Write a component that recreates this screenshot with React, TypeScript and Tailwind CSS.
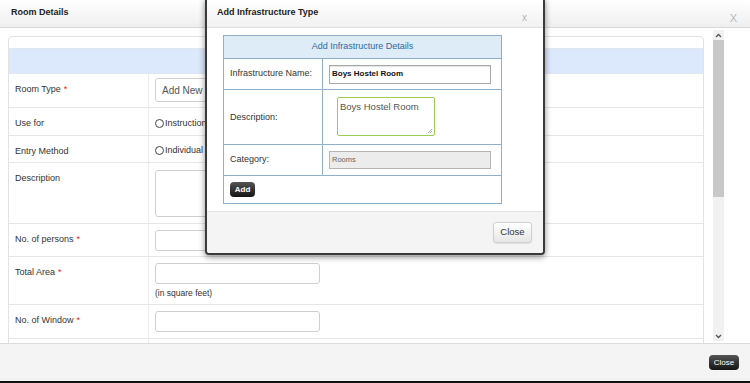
import * as React from 'react';

const Star = () => <span className="text-[#e41b17] ml-[3px]">*</span>;

type RowProps = {
    label: React.ReactNode,
    h: string,
    children?: React.ReactNode
};

const Row = ({label, h, children}: RowProps) => (
    <div className={`flex border-b border-[#e6e6e6] ${h}`}>
        <div className="w-[140px] shrink-0 border-r border-[#ececec] pl-[6px] pt-[9px] text-[9px] leading-[12px] text-[#333]">{label}</div>
        <div className="pl-[6px]">{children}</div>
    </div>
);

const Radio = ({text}: {text: string}) => (
    <span className="inline-flex items-center mr-[2px]">
        <span className="w-[9px] h-[9px] rounded-full border border-[#444] mr-[1px]"></span>
        <span>{text}</span>
    </span>
);

const Chevron = ({up}: {up?: boolean}) => (
    <svg width="7" height="5" viewBox="0 0 7 5">
        <path d={up ? 'M1 4 L3.5 1.5 L6 4' : 'M1 1 L3.5 3.5 L6 1'} fill="none" stroke="#555" strokeWidth="1.3" />
    </svg>
);

const InfraModal = () => (
    <div className="absolute left-[205px] top-[-2px] w-[340px] h-[257px] border-2 border-[#3a3a3a] rounded-b-[4px] bg-white shadow-[0_2px_6px_rgba(0,0,0,0.45)] flex flex-col font-['Liberation_Sans',Arial,sans-serif]">
        <div className="h-[28px] shrink-0 border-b border-[#dedede] bg-gradient-to-b from-white to-[#f1f1f1] flex justify-between pl-[10px] pr-[16px]">
            <span className="self-center mt-[-1px] text-[9px] font-bold text-[#222]">Add Infrastructure Type</span>
            <span className="self-end mb-[2px] text-[10px] text-[#b5b5b5]">x</span>
        </div>
        <div className="h-[183px] shrink-0 pl-[16px] pt-[7px]">
            <div className="w-[279px] border border-[#8fb0cd] text-[9px] text-[#333]">
                <div className="h-[23px] bg-[#deecf8] border-b border-[#8fb0cd] flex items-center justify-center text-[#2d69a0]">Add Infrastructure Details</div>
                <div className="h-[31px] flex border-b border-[#8fb0cd]">
                    <div className="w-[99px] border-r border-[#8fb0cd] pl-[6px] flex items-center">Infrastructure Name:</div>
                    <div className="pl-[6px] flex items-center">
                        <div className="w-[162px] h-[19px] border border-[#a9a9a9] shadow-[inset_0_1px_1px_rgba(0,0,0,0.12)] flex items-center pl-[2px] text-[8px] font-bold text-[#111]">Boys Hostel Room</div>
                    </div>
                </div>
                <div className="h-[55px] flex border-b border-[#8fb0cd]">
                    <div className="w-[99px] border-r border-[#8fb0cd] pl-[6px] flex items-center pt-[2px]">Description:</div>
                    <div className="pl-[14px] pt-[7px]">
                        <div className="relative w-[98px] h-[39px] border border-[#9acd52] rounded-[2px] pl-[2px] pt-[2px] text-[9.5px] text-[#555]">
                            Boys Hostel Room
                            <svg className="absolute right-[1px] bottom-[1px]" width="6" height="6" viewBox="0 0 6 6">
                                <path d="M5 1 L1 5 M5 3 L3 5" stroke="#999" strokeWidth="0.8" />
                            </svg>
                        </div>
                    </div>
                </div>
                <div className="h-[31px] flex border-b border-[#8fb0cd]">
                    <div className="w-[99px] border-r border-[#8fb0cd] pl-[6px] flex items-center">Category:</div>
                    <div className="pl-[6px] flex items-center">
                        <div className="w-[162px] h-[18px] border border-[#b5b5b5] bg-[#ececec] flex items-center pl-[2px] text-[7.5px] text-[#666]">Rooms</div>
                    </div>
                </div>
                <div className="h-[27px] flex items-center pl-[6px]">
                    <span className="w-[25px] h-[15px] rounded-[4px] bg-gradient-to-b from-[#555] to-[#151515] text-white text-[8px] font-bold flex items-center justify-center">Add</span>
                </div>
            </div>
        </div>
        <div className="flex-1 border-t border-[#e3e3e3] bg-[#f4f4f4] flex items-start justify-end pr-[11px] pt-[10px] rounded-b-[3px]">
            <span className="w-[39px] h-[21px] rounded-[3px] border border-[#cfcfcf] bg-gradient-to-b from-white to-[#e6e6e6] shadow-[0_1px_1px_rgba(0,0,0,0.08)] text-[9.5px] text-[#333] flex items-center justify-center">Close</span>
        </div>
    </div>
);

export default function App() {
    return (
        <div className="relative w-[750px] h-[383px] overflow-hidden bg-white flex flex-col font-['Liberation_Sans',Arial,sans-serif]">
            <div className="h-[28px] shrink-0 border-b border-[#d8d8d8] bg-gradient-to-b from-white to-[#efefef] flex justify-between pl-[11px] pr-[13px]">
                <span className="self-center mt-[-1px] text-[9px] font-bold text-[#222]">Room Details</span>
                <span className="self-end mb-[1px] text-[11px] text-[#b8b8b8]">X</span>
            </div>
            <div className="h-[315px] shrink-0 flex">
                <div className="w-[713px] shrink-0 pl-[8px] pr-[9px] pt-[8px] overflow-hidden">
                    <div className="border border-[#e2e2e2] rounded-t-[4px]">
                        <div className="h-[11px]"></div>
                        <div className="h-[26px] bg-[#dce8fb] border-y border-[#e0e6ee]"></div>
                        <Row label={<>Room Type<Star /></>} h="h-[34px]">
                            <div className="mt-[4px] w-[165px] h-[24px] border border-[#cfcfcf] rounded-[3px] pl-[6px] flex items-center text-[10px] text-[#555]">Add New</div>
                        </Row>
                        <Row label="Use for" h="h-[28px]">
                            <div className="mt-[9px] flex text-[9px] text-[#333]"><Radio text="Instructional" /></div>
                        </Row>
                        <Row label="Entry Method" h="h-[27px]">
                            <div className="mt-[8px] flex text-[9px] text-[#333]"><Radio text="Individual" /><Radio text="Bulk" /></div>
                        </Row>
                        <Row label="Description" h="h-[61px]">
                            <div className="mt-[7px] w-[165px] h-[47px] border border-[#cfcfcf] rounded-[3px]"></div>
                        </Row>
                        <Row label={<>No. of persons<Star /></>} h="h-[33px]">
                            <div className="mt-[6px] w-[165px] h-[21px] border border-[#cfcfcf] rounded-[3px]"></div>
                        </Row>
                        <Row label={<>Total Area<Star /></>} h="h-[48px]">
                            <div className="mt-[6px] w-[165px] h-[21px] border border-[#cfcfcf] rounded-[3px]"></div>
                            <div className="mt-[3px] text-[8.5px] text-[#333]">(in square feet)</div>
                        </Row>
                        <Row label={<>No. of Window<Star /></>} h="h-[34px]">
                            <div className="mt-[6px] w-[165px] h-[21px] border border-[#cfcfcf] rounded-[3px]"></div>
                        </Row>
                        <Row label="" h="h-[34px]" />
                    </div>
                </div>
                <div className="w-[11px] shrink-0 mt-[2px] mb-[2px] bg-[#f1f1f1] flex flex-col">
                    <div className="h-[10px] flex items-center justify-center"><Chevron up /></div>
                    <div className="h-[157px] bg-[#c8c8c8]"></div>
                    <div className="flex-1"></div>
                    <div className="h-[10px] flex items-center justify-center"><Chevron /></div>
                </div>
            </div>
            <div className="flex-1 border-t border-[#dcdcdc] bg-[#f4f4f4] flex items-start justify-end pr-[11px] pt-[11px]">
                <span className="w-[30px] h-[15px] rounded-[4px] bg-gradient-to-b from-[#555] to-[#151515] text-white text-[8px] flex items-center justify-center">Close</span>
            </div>
            <div className="h-[2px] shrink-0 bg-[#111]"></div>
            <InfraModal />
        </div>
    );
}
